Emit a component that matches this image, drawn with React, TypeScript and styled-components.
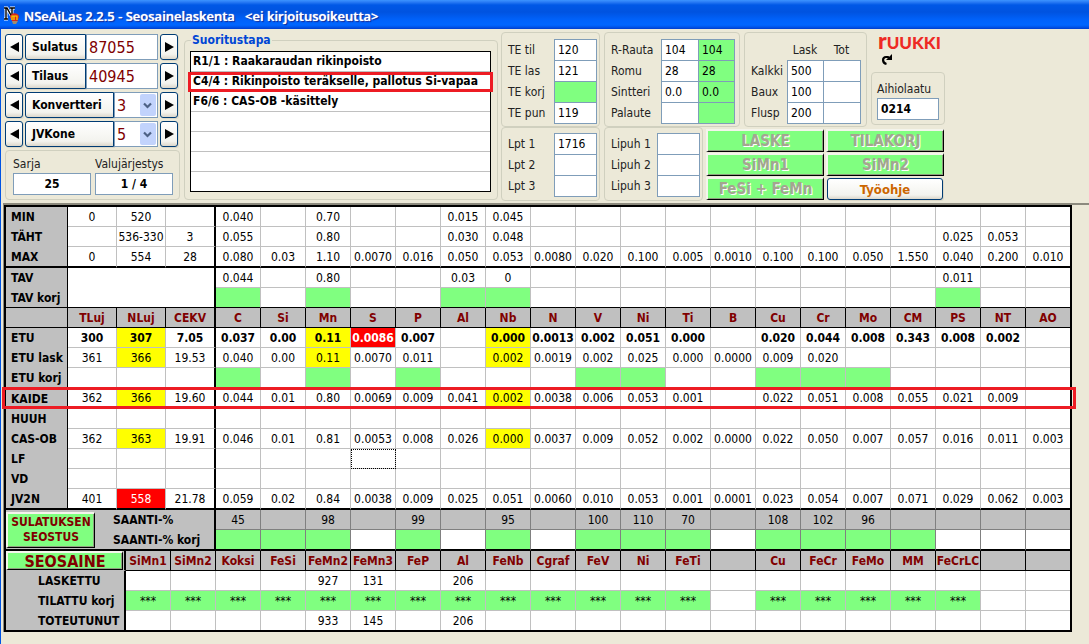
import React from "react";
import styled, { createGlobalStyle, css } from "styled-components";

const Global = createGlobalStyle`
  * { box-sizing: border-box; }
  body { margin: 0; background: #ece9d8; }
  body, button, input, select, table { font-family: "DejaVu Sans Condensed", "DejaVu Sans", sans-serif; font-size: 12px; color: #000; }
`;

const Window = styled.div`
  border-left: 1px solid #0054e3;
  min-height: 100vh;
  background: #ece9d8;
`;

const TitleBar = styled.header`
  display: flex;
  align-items: center;
  gap: 4px;
  height: 29px;
  margin-left: -1px;
  padding-left: 3px;
  background: linear-gradient(#3c94ff 0, #2a7cf5 2px, #0058e6 5px, #0053e0 12px, #0062fb 20px, #0066ff 25px, #0055ea 27px, #003dcc 29px);
`;

const Title = styled.h1`
  margin: 0;
  padding-top: 2px;
  font: 600 13px/16px "Open Sans", sans-serif;
  color: #fff;
  white-space: pre;
  text-shadow: 0 0 1px #fff, 1px 1px 1px #0a1883;
`;

const Controls = styled.div`
  display: flex;
  align-items: flex-start;
  padding: 3px 4px 2px;
`;

const Side = styled.div`
  display: flex;
  flex-direction: column;
  gap: 3px;
  width: 175px;
  margin-right: 4px;
  padding-top: 2px;
`;

const Row = styled.div`
  display: flex;
  gap: 2px;
  height: 26px;
`;

const xpButton = css`
  border: 1px solid #003c74;
  border-radius: 3px;
  background: linear-gradient(#fff, #f3f3ee 80%, #dcd7cb);
  box-shadow: 1px 1px 0 #dcd8c8;
`;

const StepButton = styled.button`
  ${xpButton}
  display: flex;
  align-items: center;
  justify-content: center;
  width: 18px;
  padding: 0;
`;

const Selector = styled.div`
  display: flex;
  width: 133px;
`;

const NameButton = styled.button`
  ${xpButton}
  flex: 1;
  padding: 0 0 0 6px;
  text-align: left;
  font-weight: bold;
  border-radius: 3px 0 0 3px;
`;

const BigInput = styled.input`
  width: 72px;
  padding: 0 2px;
  border: 1px solid #7f9db9;
  border-radius: 0;
  background: #fff;
  font-size: 16px;
  color: #800000;
`;

const SelectBox = styled.div`
  display: grid;
  width: 44px;
  border: 1px solid #7f9db9;
  background: #fff;
  & > * { grid-area: 1 / 1; }
  svg {
    justify-self: end;
    align-self: stretch;
    height: 24px;
    pointer-events: none;
  }
`;

const Select = styled.select`
  appearance: none;
  width: 100%;
  padding: 0 2px;
  border: 0;
  background: transparent;
  font-size: 16px;
  color: #800000;
`;

const Group = styled.div`
  border: 1px solid #d0d0bf;
  border-radius: 4px;
  color: #222;
`;

const SeriesGroup = styled(Group)`
  display: flex;
  gap: 4px;
  padding: 5px 6px 3px 7px;
  height: 50px;
`;

const Stacked = styled.label`
  display: flex;
  flex: 1;
  flex-direction: column;
  line-height: 17px;
`;

const StrongInput = styled.input<{ $center?: boolean }>`
  width: 100%;
  height: 22px;
  padding: 0 3px;
  border: 1px solid #7f9db9;
  background: #fff;
  font-weight: bold;
  text-align: ${(p) => (p.$center ? "center" : "left")};
`;

const MethodSet = styled.fieldset`
  flex: 0 1 314px;
  min-width: 0;
  margin: 1px 3px 0 0;
  padding: 4px 6px 7px 5px;
  border: 1px solid #d0d0bf;
  border-radius: 4px;
`;

const Legend = styled.legend`
  margin-left: 1px;
  padding: 0 1px;
  line-height: 14px;
  font-weight: bold;
  color: #0046d5;
`;

const MethodList = styled.ul`
  margin: 0;
  padding: 0;
  list-style: none;
  border: 1px solid #000;
  background: #fff;
`;

const MethodItem = styled.li`
  position: relative;
  height: 20px;
  padding-left: 2px;
  border-bottom: 1px solid #c0c0c0;
  line-height: 19px;
  font-weight: bold;
  white-space: nowrap;
  &:last-child { height: 19px; border-bottom: 0; }
`;

const MethodMark = styled.span`
  position: absolute;
  inset: 0 -3px -1px -3px;
  border: 3px solid #ed1c24;
`;

const Stack = styled.div`
  display: flex;
  flex-direction: column;
  margin-right: 4px;
`;

const Line = styled.div<{ $gap: number }>`
  display: flex;
  align-items: flex-start;
  gap: ${(p) => p.$gap}px;
`;

const FieldGroup = styled(Group)<{ $cols: string; $top?: boolean; $end?: number }>`
  display: grid;
  grid-template-columns: ${(p) => p.$cols};
  grid-auto-rows: 21px;
  align-items: center;
  padding: ${(p) => (p.$top ? "6px" : "5px")} ${(p) => p.$end ?? 3}px ${(p) => (p.$top ? "3px" : "4px")} 6px;
`;

const Field = styled.input<{ $green?: boolean }>`
  align-self: start;
  width: calc(100% + 1px);
  height: 22px;
  padding: 0 3px;
  border: 1px solid #7f9db9;
  background: ${(p) => (p.$green ? "#80ff80" : "#fff")};
`;

const Caption = styled.span`
  text-align: center;
`;

const Brand = styled.div`
  display: flex;
  flex-direction: column;
  width: 74px;
`;

const BrandMark = styled.div`
  display: flex;
  flex-direction: column;
  align-items: flex-start;
  gap: 4px;
  height: 40px;
  padding-left: 7px;
  svg { margin-left: 3px; }
`;

const BrandName = styled.span`
  height: 18px;
  font: 900 17px/16px Lato, sans-serif;
  color: #ee2a24;
  white-space: nowrap;
`;

const BrandInitial = styled.span`
  font-size: 23px;
  line-height: 16px;
`;

const GradeGroup = styled(Group)`
  padding: 8px 5px 4px;
`;

const Actions = styled.div`
  display: grid;
  grid-template-columns: 118px 118px;
  grid-auto-rows: 23px;
  gap: 1px 2px;
  padding-top: 2px;
`;

const GreenButton = styled.button<{ $size?: number }>`
  padding: 0;
  border: solid;
  border-color: #f4f4ec #000 #000 #f4f4ec;
  border-width: 2px 1px 1px 2px;
  background: #80ff80;
  font-weight: bold;
  font-size: ${(p) => p.$size ?? 12}px;
  line-height: 15px;
  color: #800000;
  box-shadow: inset -1px -1px 0 #8f9f80;
  &:disabled {
    color: #a5a58f;
    text-shadow: 1px 1px 0 #fff;
  }
`;

const GuideButton = styled.button`
  ${xpButton}
  margin: 1px 1px 0;
  font-size: 13px;
  font-weight: bold;
  color: #cc6600;
`;

const TableArea = styled.main`
  margin-left: 2px;
  padding-right: 17px;
  border-top: 2px solid #8c8a7e;
  border-left: 1px solid #8c8a7e;
`;

const Frame = styled.div`
  position: relative;
  border: 2px solid #000;
  background: #fff;
`;

const Table = styled.table`
  width: 100%;
  table-layout: fixed;
  border-collapse: separate;
  border-spacing: 0;
  th, td { padding: 0; overflow: hidden; white-space: nowrap; line-height: 16px; }
`;

type Edge = "thin" | "black" | "thick" | "dark" | "none";
const edges: Record<Edge, string> = {
  thin: "1px solid #c0c0c0",
  black: "1px solid #000",
  thick: "2px solid #000",
  dark: "1px solid #808080",
  none: "0",
};

const Cell = styled.td<{ $tone?: string; $bottom: Edge; $right: Edge; $height: number; $bold?: boolean }>`
  height: ${(p) => p.$height}px;
  border-right: ${(p) => edges[p.$right]};
  border-bottom: ${(p) => edges[p.$bottom]};
  text-align: center;
  font-weight: ${(p) => (p.$bold ? "bold" : "normal")};
  background: ${(p) => ({ g: "#80ff80", y: "#ffff00", r: "#ff0000", s: "#c0c0c0" })[p.$tone ?? ""] ?? "#fff"};
  color: ${(p) => (p.$tone === "r" ? "#fff" : "#000")};
  ${(p) => p.$tone === "f" && "outline: 1px dotted #000; outline-offset: -1px;"}
`;

const RowHead = styled.th<{ $bottom?: Edge; $right?: Edge; $indent?: number }>`
  && { padding-left: ${(p) => p.$indent ?? 5}px; }
  border-right: ${(p) => edges[p.$right ?? "black"]};
  border-bottom: ${(p) => edges[p.$bottom ?? "none"]};
  background: #c0c0c0;
  text-align: left;
  font-weight: bold;
`;

const ColHead = styled.th<{ $right: Edge }>`
  height: 20px;
  border-right: ${(p) => edges[p.$right]};
  border-bottom: 1px solid #000;
  background: #c0c0c0;
  color: #800000;
  font-weight: bold;
`;

const RowMark = styled.div`
  position: absolute;
  top: 180px;
  left: -4px;
  right: -6px;
  height: 22px;
  border: 3px solid #ed1c24;
  pointer-events: none;
`;

const ButtonHead = styled.th`
  border-bottom: ${edges.thick};
  background: #c0c0c0;
  text-align: left;
`;

const AlloyHead = styled.th`
  height: 20px;
  border-right: 2px solid #000;
  border-bottom: 1px solid #c0c0c0;
  background: #c0c0c0;
`;

const SectionButton = styled(GreenButton)<{ $w: number; $h: number }>`
  display: block;
  width: ${(p) => p.$w}px;
  height: ${(p) => p.$h}px;
  white-space: normal;
`;

/* A cell is "value" or "tone:value": g green, y yellow, r red, s silver, f focused. */
type DataRow = { name: string; cells: string; bottom?: Edge; height?: number; bold?: boolean };

const limits: DataRow[] = [
  { name: "MIN", cells: "0|520||0.040||0.70|||0.015|0.045||||||||||||" },
  { name: "TÄHT", cells: "|536-330|3|0.055||0.80|||0.030|0.048||||||||||0.025|0.053|" },
  { name: "MAX", cells: "0|554|28|0.080|0.03|1.10|0.0070|0.016|0.050|0.053|0.0080|0.020|0.100|0.005|0.0010|0.100|0.100|0.050|1.550|0.040|0.200|0.010", bottom: "thick", height: 21 },
];
const targets: DataRow[] = [
  { name: "TAV", cells: "0.044||0.80|||0.03|0||||||||||0.011||" },
  { name: "TAV korj", cells: "g:||g:|||g:|g:||||||||||g:||", bottom: "black" },
];
const analyses: DataRow[] = [
  { name: "ETU", bold: true, cells: "300|y:307|7.05|0.037|0.00|y:0.11|r:0.0086|0.007||y:0.000|0.0013|0.002|0.051|0.000||0.020|0.044|0.008|0.343|0.008|0.002|" },
  { name: "ETU lask", cells: "361|y:366|19.53|0.040|0.00|y:0.11|0.0070|0.011||y:0.002|0.0019|0.002|0.025|0.000|0.0000|0.009|0.020|||||" },
  { name: "ETU korj", cells: "|||g:||g:||g:||||g:|g:|||g:|g:|g:||||" },
  { name: "KAIDE", height: 21, cells: "362|y:366|19.60|0.044|0.01|0.80|0.0069|0.009|0.041|y:0.002|0.0038|0.006|0.053|0.001||0.022|0.051|0.008|0.055|0.021|0.009|" },
  { name: "HUUH", cells: "|||||||||||||||||||||" },
  { name: "CAS-OB", cells: "362|y:363|19.91|0.046|0.01|0.81|0.0053|0.008|0.026|y:0.000|0.0037|0.009|0.052|0.002|0.0000|0.022|0.050|0.007|0.057|0.016|0.011|0.003" },
  { name: "LF", cells: "||||||f:|||||||||||||||" },
  { name: "VD", cells: "|||||||||||||||||||||" },
  { name: "JV2N", height: 21, bottom: "thick", cells: "401|r:558|21.78|0.059|0.02|0.84|0.0038|0.009|0.025|0.051|0.0060|0.010|0.053|0.001|0.0001|0.023|0.054|0.007|0.071|0.029|0.062|0.003" },
];
const yields: DataRow[] = [
  { name: "SAANTI-%", cells: "s:45|s:|s:98|s:|s:99|s:|s:95|s:|s:100|s:110|s:70|s:|s:108|s:102|s:96|s:|s:|s:|s:", bottom: "dark" },
  { name: "SAANTI-% korj", cells: "g:|g:|g:||g:||g:||g:|g:|g:||g:|g:|g:|g:|||", bottom: "thick", height: 21 },
];
const alloys: DataRow[] = [
  { name: "LASKETTU", cells: "||||927|131||206|||||||||||||" },
  { name: "TILATTU korj", cells: "g:***|g:***|g:***|g:***|g:***|g:***|g:***|g:***|g:***|g:***|g:***|g:***|g:***||g:***|g:***|g:***|g:***|g:***||" },
  { name: "TOTEUTUNUT", cells: "||||933|145||206|||||||||||||", bottom: "none", height: 19 },
];
const elements = ["TLuj", "NLuj", "CEKV", "C", "Si", "Mn", "S", "P", "Al", "Nb", "N", "V", "Ni", "Ti", "B", "Cu", "Cr", "Mo", "CM", "PS", "NT", "AO"];
const alloyNames = ["SiMn1", "SiMn2", "Koksi", "FeSi", "FeMn2", "FeMn3", "FeP", "Al", "FeNb", "Cgraf", "FeV", "Ni", "FeTi", "", "Cu", "FeCr", "FeMo", "MM", "FeCrLC", "", ""];
const methods = ["R1/1 : Raakaraudan rikinpoisto", "C4/4 : Rikinpoisto teräkselle, pallotus Si-vapaa", "F6/6 : CAS-OB -käsittely", "", "", "", ""];

function Cells({ row, thickAt = -1, right = "thin" }: { row: DataRow; thickAt?: number; right?: Edge }) {
  const list = row.cells.split("|");
  return (
    <>
      {list.map((c, i) => {
        const [tone, value] = c.includes(":") ? c.split(":") : ["", c];
        const edge: Edge = i === list.length - 1 ? "none" : i === thickAt ? "thick" : right;
        return (
          <Cell key={i} $tone={tone} $bottom={row.bottom ?? "thin"} $right={edge} $height={row.height ?? 20} $bold={row.bold}>
            {value}
          </Cell>
        );
      })}
    </>
  );
}

function Columns({ lead }: { lead: number[] }) {
  return (
    <colgroup>
      {lead.map((w, i) => <col key={i} width={w} />)}
      {Array.from({ length: 18 }, (_, i) => <col key={"e" + i} />)}
      <col width={44} />
    </colgroup>
  );
}

function Arrow({ flip }: { flip?: boolean }) {
  return (
    <svg width="9" height="10" viewBox="0 0 9 10" aria-hidden="true">
      <path d={flip ? "M0 0V10L9 5Z" : "M9 0V10L0 5Z"} fill="#000" />
    </svg>
  );
}

function Stepper({ name, children }: { name: string; children: React.ReactNode }) {
  return (
    <Row>
      <StepButton aria-label={name + " edellinen"}><Arrow /></StepButton>
      <Selector>
        <NameButton>{name}</NameButton>
        {children}
      </Selector>
      <StepButton aria-label={name + " seuraava"}><Arrow flip /></StepButton>
    </Row>
  );
}

function Dropdown({ name, value }: { name: string; value: string }) {
  return (
    <SelectBox>
      <Select aria-label={name} defaultValue={value}><option>{value}</option></Select>
      <svg width="17" height="24" viewBox="0 0 17 24" aria-hidden="true">
        <rect x="0" y="1" width="16" height="22" rx="2" fill="#c2d3fc" />
        <path d="M4 10.500L7.500 14L11 10.500" fill="none" stroke="#4d6185" strokeWidth="2.200" />
      </svg>
    </SelectBox>
  );
}

function Fields({ rows, cols, top, end }: { rows: [string, ...string[]][]; cols: string; top?: boolean; end?: number }) {
  return (
    <FieldGroup $cols={cols} $top={top} $end={end}>
      {rows.map(([label, ...values]) => (
        <React.Fragment key={label}>
          <label htmlFor={label}>{label}</label>
          {values.map((v, i) => {
            const green = v.startsWith("g:");
            return <Field key={i} id={i ? undefined : label} aria-label={label} $green={green} defaultValue={green ? v.slice(2) : v} />;
          })}
        </React.Fragment>
      ))}
    </FieldGroup>
  );
}

export default function App() {
  return (
    <Window>
      <Global />
      <TitleBar>
        <svg width="17" height="18" viewBox="0 0 17 18" aria-hidden="true">
          <path d="M1 2H4L9 11V2M7 2H12M1 13H5M3 2V13" fill="none" stroke="#fff" strokeWidth="3" />
          <path d="M1 2H4L9 11V2M7 2H12M1 13H5M3 2V13" fill="none" stroke="#000" strokeWidth="1.400" />
          <path d="M7 11C7 6 16 6 16 11L14 16L11 17L9 15Z" fill="#d8271c" />
          <path d="M9 14V10H11V14M11 10H14V14" fill="none" stroke="#ffe000" strokeWidth="1.200" />
          <path d="M9 15H15L13 18H10Z" fill="#a08c70" />
        </svg>
        <Title>{"NSeAiLas 2.2.5 - Seosainelaskenta   <ei kirjoitusoikeutta>"}</Title>
      </TitleBar>
      <Controls>
        <Side>
          <Stepper name="Sulatus"><BigInput aria-label="Sulatus" defaultValue="87055" /></Stepper>
          <Stepper name="Tilaus"><BigInput aria-label="Tilaus" defaultValue="40945" /></Stepper>
          <Stepper name="Konvertteri"><Dropdown name="Konvertteri" value="3" /></Stepper>
          <Stepper name="JVKone"><Dropdown name="JVKone" value="5" /></Stepper>
          <SeriesGroup>
            <Stacked>Sarja<StrongInput $center defaultValue="25" /></Stacked>
            <Stacked>Valujärjestys<StrongInput $center defaultValue="1 / 4" /></Stacked>
          </SeriesGroup>
        </Side>
        <MethodSet>
          <Legend>Suoritustapa</Legend>
          <MethodList>
            {methods.map((m, i) => (
              <MethodItem key={i}>{m}{i === 1 && <MethodMark />}</MethodItem>
            ))}
          </MethodList>
        </MethodSet>
        <Stack>
          <Fields top cols="46px 42px" rows={[["TE til", "120"], ["TE las", "121"], ["TE korj", "g:"], ["TE pun", "119"]]} />
          <Fields cols="46px 42px" rows={[["Lpt 1", "1716"], ["Lpt 2", ""], ["Lpt 3", ""]]} />
        </Stack>
        <Stack>
          <Line $gap={4}>
            <Fields top end={5} cols="50px 37px 36px" rows={[["R-Rauta", "104", "g:104"], ["Romu", "28", "g:28"], ["Sintteri", "0.0", "g:0.0"], ["Palaute", "", "g:"]]} />
            <FieldGroup $cols="36px 36px 37px" $top $end={6}>
              <span /><Caption>Lask</Caption><Caption>Tot</Caption>
              {[["Kalkki", "500"], ["Baux", "100"], ["Flusp", "200"]].map(([label, v]) => (
                <React.Fragment key={label}>
                  <label htmlFor={label}>{label}</label>
                  <Field id={label} defaultValue={v} />
                  <Field aria-label={label + " Tot"} />
                </React.Fragment>
              ))}
            </FieldGroup>
            <Brand>
              <BrandMark>
                <BrandName><BrandInitial>r</BrandInitial>UUKKI</BrandName>
                <svg width="13" height="12" viewBox="0 0 13 12" aria-hidden="true">
                  <path d="M5.500 10C1 9 1 3 5 3H7L9 5" fill="none" stroke="#000" strokeWidth="2.200" />
                  <path d="M11 0V6H5Z" fill="#000" />
                </svg>
              </BrandMark>
              <GradeGroup>
                <Stacked>Aihiolaatu<StrongInput defaultValue="0214" /></Stacked>
              </GradeGroup>
            </Brand>
          </Line>
          <Line $gap={3}>
            <Fields cols="46px 42px" rows={[["Lipuh 1", ""], ["Lipuh 2", ""], ["Lipuh 3", ""]]} />
            <Actions>
              <GreenButton disabled $size={15}>LASKE</GreenButton>
              <GreenButton disabled $size={15}>TILAKORJ</GreenButton>
              <GreenButton disabled $size={15}>SiMn1</GreenButton>
              <GreenButton disabled $size={15}>SiMn2</GreenButton>
              <GreenButton disabled $size={15}>FeSi + FeMn</GreenButton>
              <GuideButton>Työohje</GuideButton>
            </Actions>
          </Line>
        </Stack>
      </Controls>
      <TableArea>
        <Frame>
          <Table>
            <Columns lead={[62, 49, 49, 50]} />
            <tbody>
              {limits.map((r) => (
                <tr key={r.name}><RowHead scope="row" $bottom={r.bottom}>{r.name}</RowHead><Cells row={r} thickAt={2} /></tr>
              ))}
              {targets.map((r, i) => (
                <tr key={r.name}>
                  <RowHead scope="row" $bottom={r.bottom}>{r.name}</RowHead>
                  {i === 0 && <Cell colSpan={3} rowSpan={2} $bottom="black" $right="thick" $height={40} />}
                  <Cells row={r} />
                </tr>
              ))}
              <tr>
                <RowHead as="td" $bottom="black" />
                {elements.map((e, i) => (
                  <ColHead key={i} scope="col" $right={i === 21 ? "none" : i === 2 ? "thick" : "black"}>{e}</ColHead>
                ))}
              </tr>
              {analyses.map((r) => (
                <tr key={r.name}><RowHead scope="row" $bottom={r.bottom}>{r.name}</RowHead><Cells row={r} thickAt={2} /></tr>
              ))}
            </tbody>
          </Table>
          <Table>
            <Columns lead={[92, 118]} />
            <tbody>
              {yields.map((r, i) => (
                <tr key={r.name}>
                  {i === 0 && (
                    <ButtonHead rowSpan={2}><SectionButton $w={89} $h={36}>SULATUKSEN SEOSTUS</SectionButton></ButtonHead>
                  )}
                  <RowHead scope="row" $indent={15} $right="thick" $bottom={i ? "thick" : "none"}>{r.name}</RowHead>
                  <Cells row={r} right="dark" />
                </tr>
              ))}
            </tbody>
          </Table>
          <Table>
            <Columns lead={[120, 45, 45]} />
            <tbody>
              <tr>
                <AlloyHead><SectionButton $w={117} $h={19} $size={16}>SEOSAINE</SectionButton></AlloyHead>
                {alloyNames.map((e, i) => <ColHead key={i} scope="col" $right={i === 20 ? "none" : "black"}>{e}</ColHead>)}
              </tr>
              {alloys.map((r) => (
                <tr key={r.name}><RowHead scope="row" $indent={32} $right="thick">{r.name}</RowHead><Cells row={r} /></tr>
              ))}
            </tbody>
          </Table>
          <RowMark />
        </Frame>
      </TableArea>
    </Window>
  );
}
